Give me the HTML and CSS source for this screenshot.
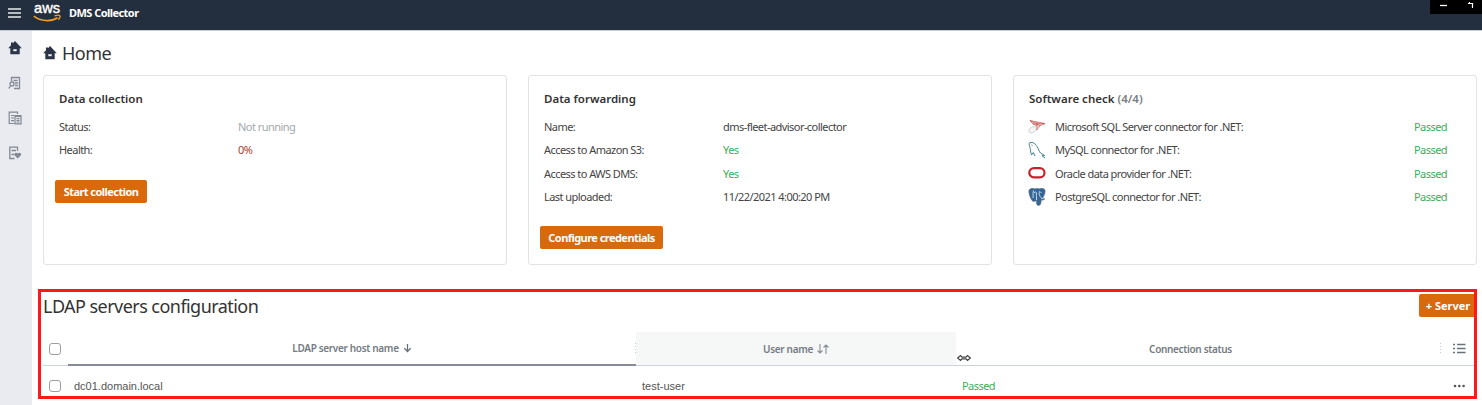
FILE: index.html
```html
<!DOCTYPE html>
<html lang="en">
  <head>
    <meta charset="utf-8" />
    <title>DMS Collector</title>
    <link rel="stylesheet" href="styles.css">
  </head>
  <body>
    <svg class="defs" width="0" height="0">
      <symbol id="home" viewBox="0 0 14 14">
        <path d="M7 0 13.8 7.200H11.700V13.300H2.300V7.200H.200L3 4.300V1.500H5V2.200Z" fill="#2b3547" />
        <path d="M5.3 8.2h3.4v2H5.3z" fill="#eef0f5" />
      </symbol>
    </svg>

    <header class="topbar">
      <svg class="burger" width="13" height="10" viewBox="0 0 13 10">
        <path d="M0 1h13M0 5h13M0 9h13" stroke="#e9ebee" stroke-width="1.7" />
      </svg>
      <svg class="aws" width="30" height="24" viewBox="0 0 30 24">
        <text x="1" y="13" textLength="26" lengthAdjust="spacingAndGlyphs">aws</text>
        <path d="M.8 16.200C7.500 21.500 18.500 21.800 24.500 17.800" fill="none" stroke="#f49b20" stroke-width="1.7" />
        <path d="M21.500 15.800C24 15 26.300 15 26.800 15.700S26.500 18.400 25.300 19.700" fill="none" stroke="#f49b20" stroke-width="1.3" />
      </svg>
      <span class="product">DMS Collector</span>
      <div class="window-buttons">
        <svg width="52" height="14" viewBox="0 0 52 14">
          <path d="M10 5.500h7" stroke="#fff" stroke-width="1.3" />
          <path d="M38 3.500h4.500V8M39.500 2v2" fill="none" stroke="#fff" stroke-width="1.2" />
        </svg>
      </div>
    </header>

    <div class="layout">
      <nav class="sidebar">
        <svg width="14" height="14"><use href="#home" /></svg>
        <svg width="14" height="14" viewBox="0 0 14 14" fill="none" stroke="#838893" stroke-width="1.300">
          <path d="M3.500 5V1.500H11.500v11H6M5.500 4.500h4M7 7h3M7 9.500h3" />
          <circle cx="4" cy="8" r="2" />
          <path d="M2.600 9.700.8 12.500" />
        </svg>
        <svg width="14" height="14" viewBox="0 0 14 14" fill="none" stroke="#838893" stroke-width="1.200">
          <path d="M6 12.500H1.200V1.200H9.500V3M3 4.500h3M3 7h3M3 9.700h3" />
          <path d="M7 4.500h6v8.300H7zM8.500 7.500h3M8.500 9.300h3M8.500 11h3M7 5.300h6" />
        </svg>
        <svg width="14" height="14" viewBox="0 0 14 14" fill="none" stroke="#838893" stroke-width="1.300">
          <path d="M6.500 12.500H1.800V1.200H9.500V5M3.500 4.500H8M3.500 8.500H6" />
          <path d="M9.700 12.600 6.500 9.200C5.600 7.500 8 5.500 9.700 7.500 11.400 5.500 13.900 7.500 13 9.200Z" fill="#838893" stroke="none" />
        </svg>
      </nav>

      <main class="content">
        <h1 class="page-title"><svg width="14" height="14"><use href="#home" /></svg><span>Home</span></h1>

        <div class="cards">
          <section class="card">
            <h2>Data collection</h2>
            <dl>
              <dt>Status:</dt><dd class="muted">Not running</dd>
              <dt>Health:</dt><dd class="bad">0%</dd>
            </dl>
            <button class="btn start">Start collection</button>
          </section>

          <section class="card">
            <h2>Data forwarding</h2>
            <dl>
              <dt>Name:</dt><dd>dms-fleet-advisor-collector</dd>
              <dt>Access to Amazon S3:</dt><dd class="ok">Yes</dd>
              <dt>Access to AWS DMS:</dt><dd class="ok">Yes</dd>
              <dt>Last uploaded:</dt><dd>11/22/2021 4:00:20 PM</dd>
            </dl>
            <button class="btn configure">Configure credentials</button>
          </section>

          <section class="card">
            <h2>Software check <span class="count">(4/4)</span></h2>
            <ul class="checks">
              <li>
                <svg width="18" height="18" viewBox="0 0 18 18">
                  <path d="M2 2.500 9 4l8 1.500-5 2.200-3.500 4.500L9 8 5 6Z" fill="#f3dddd" stroke="#c4544f" stroke-width=".7" />
                  <path d="M2 2.500 12 7.500M5 6l12-.5M9 4v4" stroke="#c4544f" stroke-width=".8" />
                  <path d="M1 11.500C3 8.500 7 8 8 9.500c1 3-3 5.500-5 5.500C1 15 .5 13 1 11.500" fill="#f5f5f5" stroke="#c9c9c9" stroke-width=".8" />
                </svg>
                <span>Microsoft SQL Server connector for .NET:</span><span class="ok">Passed</span>
              </li>
              <li>
                <svg width="18" height="18" viewBox="0 0 18 18" fill="none" stroke="#3f8289" stroke-width="1">
                  <path d="M3.500 14C2.500 11 2.500 9 2 6.500 1.300 4 .5 2 2 1.500 5 .8 7.500 3 9 5.500c1.700 2.500 2 5 3.500 6.500 1.500 1 3 1.500 4 2.500l-2.500.2 3 2.300" />
                  <path d="M3.500 14 5.300 11.500 7 15M3.500 4l1 .5" />
                </svg>
                <span>MySQL connector for .NET:</span><span class="ok">Passed</span>
              </li>
              <li>
                <svg width="18" height="18" viewBox="0 0 18 18">
                  <rect x="1.300" y="4.200" width="15.200" height="9.200" rx="4.600" fill="none" stroke="#c8202a" stroke-width="2.200" />
                </svg>
                <span>Oracle data provider for .NET:</span><span class="ok">Passed</span>
              </li>
              <li>
                <svg width="18" height="18" viewBox="0 0 18 18">
                  <path d="M1 2C3-.2 5.500 0 7 1c1.500-1 3-.8 4 0 2-1.300 5-.8 6 1 .5 3-1 6-2.500 8.500l2.300.3c-1 1.400-2.500 1.500-3.500 1.200-.3 2.500-.3 5.500-2.800 5.500S8.500 15 8.500 12.500C7 13.500 5 14 4 12.500 2 9.500.3 5 1 2Z" fill="#33669b" stroke="#66727e" stroke-width=".6" />
                  <path d="M5.500 2.500C4.500 5 5.500 8 5 10M8.500 12V8.500M7.500 3.500C9 5 8 7 8.500 8.500M12 3c-1.500 2-1 5 1.500 7M6 4.500h1M12.500 4.500h1M13 10l2 .8" fill="none" stroke="#dce8f1" stroke-width=".9" />
                </svg>
                <span>PostgreSQL connector for .NET:</span><span class="ok">Passed</span>
              </li>
            </ul>
          </section>
        </div>

        <section class="ldap">
          <div class="ldap-head">
            <h1>LDAP servers configuration</h1>
            <button class="btn add">+ Server</button>
          </div>
          <div class="row head">
            <div class="cell check"><span class="checkbox"></span></div>
            <div class="cell sorted">
              <span>LDAP server host name</span>
              <svg width="9" height="10" viewBox="0 0 9 10"><path d="M4.500 1v7.500M1.300 5.300l3.200 3.200 3.200-3.200" fill="none" stroke="#686f78" stroke-width="1.300" /></svg>
            </div>
            <div class="cell hovered">
              <span>User name</span>
              <svg width="12" height="10" viewBox="0 0 12 10" fill="none" stroke="#878e95" stroke-width="1.100"><path d="M3 0v9M.5 6.500 3 9l2.500-2.500M9 10V1M6.500 3.500 9 1l2.500 2.500" /></svg>
            </div>
            <div class="cell status"><span>Connection status</span></div>
            <div class="cell tools">
              <svg width="13" height="11" viewBox="0 0 13 11"><path d="M0 1.500h2M4 1.500h8.500M0 5.500h2M4 5.500h8.500M0 9.500h2M4 9.500h8.500" stroke="#67727c" stroke-width="1.300" /></svg>
            </div>
          </div>
          <div class="row">
            <div class="cell check"><span class="checkbox"></span></div>
            <div class="cell value"><span class="typed">dc01.domain.local</span></div>
            <div class="cell value"><span class="typed">test-user</span></div>
            <div class="cell value ok">Passed</div>
            <div class="cell tools">
              <svg width="13" height="4" viewBox="0 0 13 4" fill="#50565c"><circle cx="2" cy="2" r="1.300" /><circle cx="6.300" cy="2" r="1.300" /><circle cx="10.600" cy="2" r="1.300" /></svg>
            </div>
          </div>
          <svg class="resize-cursor" width="14" height="8" viewBox="0 0 14 8" fill="#fff" stroke="#444" stroke-width="1.200">
            <path d="M.7 4 3.500 1.500 5 3.200h4L10.500 1.500 13.300 4l-2.800 2.500L9 4.800H5L3.500 6.500Z" />
          </svg>
          <div class="highlight"></div>
        </section>
      </main>
    </div>
  </body>
</html>
```
FILE: styles.css
```css
* {
  box-sizing: border-box;
}
body {
  margin: 0;
  height: 405px;
  overflow: hidden;
  font-family: "Noto Sans", "Open Sans", sans-serif;
  font-size: 11px;
  letter-spacing: -0.55px;
  color: #444;
  background: #fff;
}
h1, h2, dl, dd, ul {
  margin: 0;
  padding: 0;
}
svg {
  display: block;
  flex: none;
}
.defs {
  position: absolute;
}

/* top bar */
.topbar {
  display: flex;
  height: 30px;
  background: #232f3e;
  color: #fff;
}
.burger {
  margin: 8px 0 0 8px;
}
.aws {
  margin-left: 12px;
}
.aws text {
  font: 14.3px "Liberation Sans", sans-serif;
  letter-spacing: 0;
  fill: #fff;
  stroke: #fff;
  stroke-width: 0.4px;
}
.product {
  margin-left: 6px;
  line-height: 26px;
  font-weight: 700;
}
.window-buttons {
  margin-left: auto;
  width: 52px;
  height: 14px;
  background: #000;
}

.layout {
  display: flex;
  height: 375px;
  border-top: 1px solid #c9cccf;
}
.sidebar {
  display: flex;
  flex-direction: column;
  align-items: center;
  gap: 21px;
  width: 32px;
  padding: 10px 3px 0 0;
  background: #e9ebf0;
}
.content {
  flex: 1;
  padding: 9px 5px 0 11px;
}
.page-title {
  display: flex;
  align-items: center;
  gap: 5px;
  height: 25px;
}
h1 {
  font-size: 18px;
  font-weight: 400;
  color: #333;
}

/* cards */
.cards {
  display: grid;
  grid-template-columns: repeat(3, 1fr);
  gap: 21px;
  margin-top: 10px;
}
.card {
  height: 190px;
  padding: 14px 14px 0;
  border: 1px solid #e1e3e5;
  border-radius: 3px;
}
h2 {
  line-height: 18px;
  margin-bottom: 7px;
  font-size: 11.5px;
  font-weight: 600;
  letter-spacing: 0;
  color: #333;
}
.count {
  color: #777d85;
}
dl {
  display: grid;
  grid-template-columns: 179px 1fr;
  grid-auto-rows: 23.3px;
  line-height: 23px;
}
.muted {
  color: #a3a8ac;
}
.bad {
  color: #a93e31;
}
.ok {
  color: #40ac5d;
}
.btn {
  display: block;
  height: 23px;
  margin: 18px 0 0 -3px;
  padding: 0;
  border: 0;
  border-radius: 2px;
  background: #d9690d;
  color: #fff;
  font: 700 11px "Noto Sans", "Open Sans", sans-serif;
  letter-spacing: -0.55px;
}
.start {
  width: 92px;
}
.configure {
  width: 123px;
}
.checks {
  list-style: none;
}
.checks li {
  display: grid;
  grid-template-columns: 27px 1fr 48px;
  align-items: center;
  height: 23.3px;
}
.card h2,
.card dl {
  padding-left: 1px;
}

/* LDAP servers */
.ldap {
  position: relative;
  margin-top: 25px;
}
.ldap-head {
  display: flex;
  justify-content: space-between;
  height: 42px;
}
.ldap-head h1 {
  line-height: 32px;
}
.add {
  width: 58px;
  margin: 4px 0 0;
  letter-spacing: 0;
}
.row {
  display: grid;
  grid-template-columns: 25px 568px 320px 485px 36px;
  height: 39px;
}
.cell {
  display: flex;
  align-items: center;
}
.head {
  height: 34px;
  color: #747b83;
  font-size: 10px;
  font-weight: 600;
  letter-spacing: -0.33px;
}
.head .cell {
  justify-content: center;
  gap: 4px;
  border-bottom: 1px solid #ccd5df;
}
.head .check,
.cell.check {
  justify-content: flex-start;
  padding-left: 6px;
}
.checkbox {
  width: 12px;
  height: 12px;
  border: 1px solid #9b9fa3;
  border-radius: 3px;
}
.head .sorted {
  border-bottom: 2px solid #858b97;
}
.sorted,
.status {
  background: repeating-linear-gradient(#c8cbce 0 1px, transparent 1px 3px) right center / 1px 11px no-repeat;
}
.hovered {
  background: #f6f7f7;
}
.head .status {
  padding-right: 16px;
}
.value {
  padding-left: 6px;
}
.typed {
  font-family: "Liberation Sans", sans-serif;
  letter-spacing: 0;
  color: #555;
}
.cell.tools {
  justify-content: center;
}
.resize-cursor {
  position: absolute;
  left: 914px;
  top: 64px;
}
.highlight {
  position: absolute;
  left: -5px;
  top: -1px;
  width: 1439px;
  height: 110px;
  border: 3px solid #fb1b12;
}
```
